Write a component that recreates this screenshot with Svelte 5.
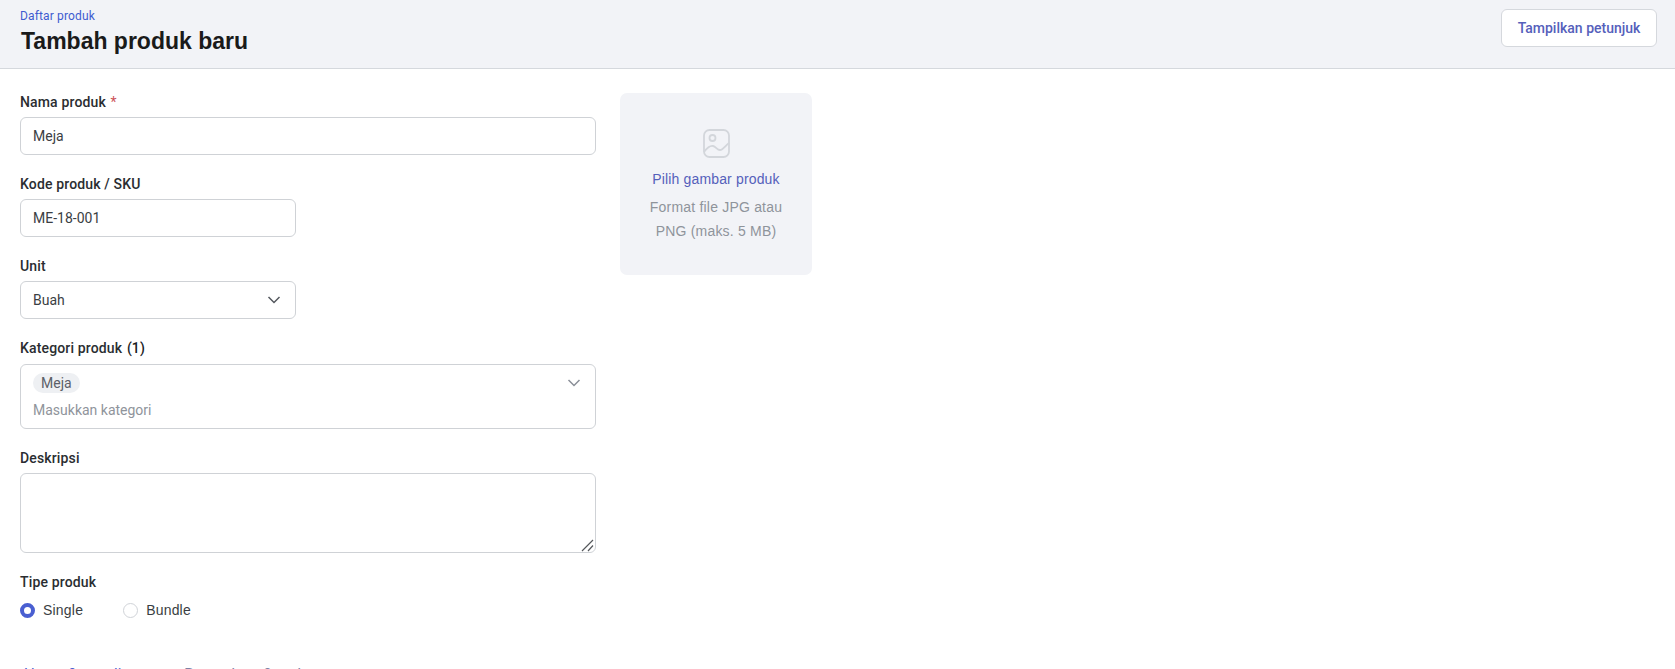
<script>
	let nama = $state('Meja');
	let sku = $state('ME-18-001');
	let tipe = $state('single');
</script>

<div class="page">
	<header class="topbar">
		<div class="heading">
			<a class="crumb" href="#daftar">Daftar produk</a>
			<h1>Tambah produk baru</h1>
		</div>
		<button class="hint" type="button">Tampilkan petunjuk</button>
	</header>

	<main class="content">
		<form class="form">
			<div class="field">
				<label for="nama">Nama produk <span class="req">*</span></label>
				<input id="nama" class="control wide" bind:value={nama} />
			</div>
			<div class="field">
				<label for="sku">Kode produk / SKU</label>
				<input id="sku" class="control narrow" bind:value={sku} />
			</div>
			<div class="field">
				<label for="unit">Unit</label>
				<div id="unit" class="control narrow select">
					<span>Buah</span>
					<svg class="chev dark" width="16" height="16" viewBox="0 0 16 16" fill="none">
						<path d="M2.5 5 8 10.5 13.5 5" stroke="currentColor" stroke-width="1.5" />
					</svg>
				</div>
			</div>
			<div class="field">
				<label class="tall" for="kategori">Kategori produk <b>(1)</b></label>
				<div id="kategori" class="control wide multi">
					<div class="multi-values">
						<span class="chip">Meja</span>
						<span class="placeholder">Masukkan kategori</span>
					</div>
					<svg class="chev low" width="16" height="16" viewBox="0 0 16 16" fill="none">
						<path d="M2.5 5 8 10.5 13.5 5" stroke="currentColor" stroke-width="1.5" />
					</svg>
				</div>
			</div>
			<div class="field">
				<label for="deskripsi">Deskripsi</label>
				<div class="area-wrap">
					<textarea id="deskripsi" class="control wide area"></textarea>
					<svg class="grip" width="13" height="14" viewBox="0 0 13 14" fill="none">
						<path d="M1 13 12 2M7 13l5-5.500" stroke="currentColor" stroke-width="1.2" />
					</svg>
				</div>
			</div>
			<div class="field">
				<span class="label">Tipe produk</span>
				<div class="radios">
					<label class="radio">
						<input type="radio" name="tipe" value="single" bind:group={tipe} />
						<span>Single</span>
					</label>
					<label class="radio">
						<input type="radio" name="tipe" value="bundle" bind:group={tipe} />
						<span>Bundle</span>
					</label>
				</div>
			</div>
			<nav class="tabs">
				<span class="active">Harga &amp; supplier</span>
				<span>Pengadaan &amp; stok</span>
			</nav>
		</form>

		<aside class="upload">
			<svg width="27" height="29" viewBox="0 0 27 29" fill="none" stroke="currentColor" stroke-width="1.8">
				<rect x="1" y="1" width="25" height="27" rx="5.500" />
				<circle cx="9.500" cy="9" r="3" />
				<path d="M1 23c3-4 6-6.500 9-6s4 4 7 4 6-5 9-7" />
			</svg>
			<span class="pick">Pilih gambar produk</span>
			<p>Format file JPG atau PNG (maks. 5 MB)</p>
		</aside>
	</main>
</div>

<style>
	:global(body) {
		margin: 0;
		background: #fff;
	}

	.page {
		height: 669px;
		overflow: hidden;
		font-family: Roboto, sans-serif;
		font-size: 14px;
		color: #1f2328;
	}

	.topbar {
		display: flex;
		justify-content: space-between;
		align-items: flex-start;
		box-sizing: border-box;
		height: 69px;
		padding: 9px 18px 0 20px;
		background: #f2f3f7;
		border-bottom: 1px solid #d5d8dd;
	}

	.crumb {
		display: block;
		font-size: 12px;
		line-height: 15px;
		letter-spacing: 0.15px;
		color: #3f5bd0;
		text-decoration: none;
	}

	h1 {
		margin: 3px 0 0 1px;
		font-family: 'Liberation Sans', sans-serif;
		font-size: 23px;
		line-height: 28px;
		font-weight: 700;
		color: #1a1a1a;
	}

	.hint {
		width: 156px;
		height: 38px;
		padding: 0;
		background: #fff;
		border: 1px solid #d5d8dd;
		border-radius: 6px;
		font-family: Roboto, sans-serif;
		font-size: 14px;
		font-weight: 500;
		color: #5560bb;
	}

	.content {
		display: flex;
		align-items: flex-start;
		gap: 24px;
		padding: 24px 20px 0;
	}

	.form {
		display: flex;
		flex-direction: column;
		gap: 20px;
		width: 576px;
	}

	.field label,
	.label {
		display: block;
		margin-bottom: 6px;
		font-size: 14px;
		line-height: 18px;
		font-weight: 500;
		letter-spacing: 0.15px;
		color: #2a2d31;
	}

	.field label.tall {
		margin-bottom: 7px;
	}

	.field b {
		margin-left: 1px;
		font-weight: 500;
		color: #1a1c1f;
	}

	.req {
		margin-left: 1px;
		font-weight: 400;
		color: #cc5257;
	}

	.control {
		display: block;
		box-sizing: border-box;
		height: 38px;
		padding: 0 12px;
		background: #fff;
		border: 1px solid #cfd2d6;
		border-radius: 6px;
		font-family: Roboto, sans-serif;
		font-size: 14px;
		color: #3a3e43;
		outline: none;
	}

	.wide {
		width: 576px;
	}

	.narrow {
		width: 276px;
	}

	.select {
		display: flex;
		align-items: center;
		justify-content: space-between;
		padding-right: 13px;
	}

	.chev {
		flex: none;
		color: #8a8f98;
	}

	.chev.dark {
		color: #54585e;
	}

	.chev.low {
		margin-top: 2px;
	}

	.multi {
		display: flex;
		justify-content: space-between;
		height: 65px;
		padding: 8px 13px 0 12px;
	}

	.multi-values {
		display: flex;
		flex-direction: column;
		align-items: flex-start;
		gap: 9px;
	}

	.chip {
		height: 20px;
		padding: 0 8px;
		line-height: 20px;
		border-radius: 10px;
		background: #eef0f3;
		color: #5b6068;
	}

	.placeholder {
		line-height: 16px;
		color: #8f949b;
	}

	.area-wrap {
		position: relative;
		width: 576px;
		height: 80px;
	}

	.area {
		height: 80px;
		padding: 8px 12px;
		resize: none;
	}

	.grip {
		position: absolute;
		right: 2px;
		bottom: 1px;
		color: #55585c;
		pointer-events: none;
	}

	.radios {
		display: flex;
		gap: 40px;
		margin-top: 11px;
	}

	.field .radio {
		display: flex;
		align-items: center;
		gap: 8px;
		margin: 0;
		line-height: 16px;
		font-family: 'Liberation Sans', sans-serif;
		font-weight: 400;
		letter-spacing: 0.2px;
		color: #3a3e43;
	}

	.radio input {
		appearance: none;
		box-sizing: border-box;
		width: 15px;
		height: 15px;
		margin: 0;
		background: #fff;
		border: 1px solid #d0d3d8;
		border-radius: 50%;
	}

	.radio input:checked {
		border: 4px solid #4a5fd1;
	}

	.tabs {
		display: flex;
		gap: 42px;
		margin-top: 27px;
		font-size: 15px;
		line-height: 18px;
		color: #7d82a6;
	}

	.tabs span {
		padding: 0 4px;
		white-space: nowrap;
	}

	.tabs .active {
		color: #4a5fd1;
	}

	.upload {
		display: flex;
		flex-direction: column;
		align-items: center;
		box-sizing: border-box;
		width: 192px;
		height: 182px;
		padding: 36px 20px 0;
		background: #f2f3f7;
		border-radius: 7px;
		color: #d3d6db;
	}

	.pick {
		margin-top: 12px;
		font-family: 'Liberation Sans', sans-serif;
		font-size: 14px;
		line-height: 18px;
		letter-spacing: 0.15px;
		color: #5560bb;
	}

	.upload p {
		margin: 7px 0 0;
		font-family: 'Liberation Sans', sans-serif;
		font-size: 14px;
		line-height: 24px;
		letter-spacing: 0.2px;
		text-align: center;
		color: #8f949b;
	}
</style>
